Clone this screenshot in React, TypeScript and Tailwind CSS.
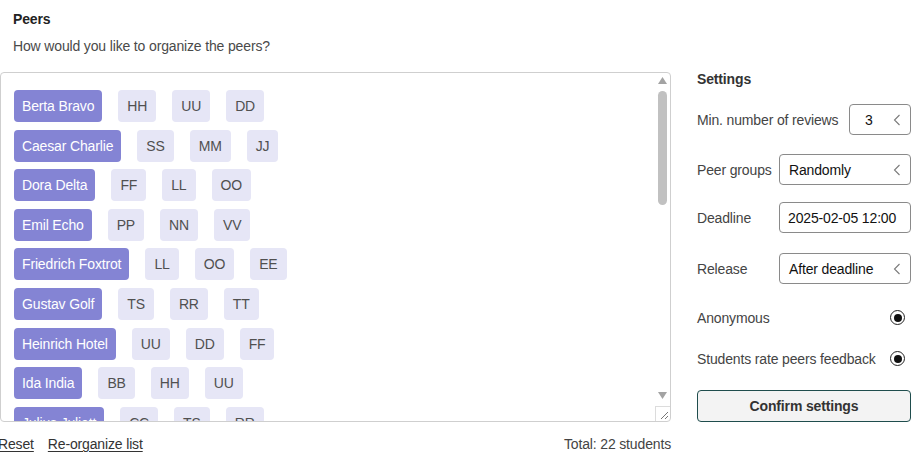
import React from "react";

type PeerRow = {
  name: string;
  peers: string[];
};

const rows: PeerRow[] = [
  { name: "Berta Bravo", peers: ["HH", "UU", "DD"] },
  { name: "Caesar Charlie", peers: ["SS", "MM", "JJ"] },
  { name: "Dora Delta", peers: ["FF", "LL", "OO"] },
  { name: "Emil Echo", peers: ["PP", "NN", "VV"] },
  { name: "Friedrich Foxtrot", peers: ["LL", "OO", "EE"] },
  { name: "Gustav Golf", peers: ["TS", "RR", "TT"] },
  { name: "Heinrich Hotel", peers: ["UU", "DD", "FF"] },
  { name: "Ida India", peers: ["BB", "HH", "UU"] },
  { name: "Julius Juliett", peers: ["CC", "TS", "RR"] },
];

function Chevron() {
  return (
    <svg width="8" height="12" viewBox="0 0 8 12" className="shrink-0">
      <polyline points="6.5,1 1.5,6 6.5,11" fill="none" stroke="#7a7a7a" strokeWidth="1.1" />
    </svg>
  );
}

function SelectBox({ value, width }: { value: string; width: string }) {
  return (
    <div
      className={`flex h-[31px] items-center justify-between rounded-[4px] border border-[#8a8a8a] pr-[9px] text-[#111] ${width}`}
    >
      <span>{value}</span>
      <Chevron />
    </div>
  );
}

function Radio() {
  return (
    <span className="mr-[6px] flex h-[15px] w-[15px] items-center justify-center rounded-full border-[1.5px] border-[#222]">
      <span className="h-[8px] w-[8px] rounded-full bg-[#111]" />
    </span>
  );
}

function PeerList() {
  return (
    <div className="flex h-[350px] overflow-hidden rounded-[4px] border border-[#cfcfcf]">
      <div className="flex flex-1 flex-col gap-[7.6px] overflow-hidden pl-[13px] pt-[17px]">
        {rows.map((row) => (
          <div key={row.name} className="flex shrink-0 items-center gap-[16px]">
            <span className="flex h-[32px] items-center rounded-[4px] bg-[#8484d4] px-[8px] text-white">
              {row.name}
            </span>
            {row.peers.map((peer, i) => (
              <span
                key={row.name + i}
                className="flex h-[32px] items-center rounded-[4px] bg-[#e6e6f6] px-[9px] text-[#505050]"
              >
                {peer}
              </span>
            ))}
          </div>
        ))}
      </div>
      <div className="flex w-[15px] shrink-0 flex-col items-center">
        <svg width="9" height="7" viewBox="0 0 9 7" className="mt-[4px]">
          <polygon points="4.5,0 9,7 0,7" fill="#a3a3a3" />
        </svg>
        <div className="mt-[7px] h-[114px] w-[9px] rounded-full bg-[#c1c1c1]" />
        <div className="flex-1" />
        <svg width="9" height="7" viewBox="0 0 9 7" className="mb-[7px]">
          <polygon points="0,0 9,0 4.5,7" fill="#a3a3a3" />
        </svg>
        <div className="h-[15px] w-[15px] border-l border-t border-[#dcdcdc]">
          <svg width="14" height="14" viewBox="0 0 14 14">
            <line x1="12" y1="5" x2="5" y2="12" stroke="#777" strokeWidth="1" />
            <line x1="12" y1="9" x2="9" y2="12" stroke="#777" strokeWidth="1" />
          </svg>
        </div>
      </div>
    </div>
  );
}

export default function App() {
  return (
    <div className="flex h-[457px] w-[917px] overflow-hidden bg-white font-['Liberation_Sans',Arial,sans-serif] text-[14px] leading-[20px] tracking-[-0.15px] text-[#444]">
      <div className="flex w-[671px] shrink-0 flex-col">
        <div className="pl-[13px] pt-[9px] font-bold text-[#222]">Peers</div>
        <div className="mt-[7px] pl-[13px] text-[#4a4a4a]">How would you like to organize the peers?</div>
        <div className="mt-[16px]">
          <PeerList />
        </div>
        <div className="mt-[12px] flex items-center justify-between">
          <div className="-ml-[2px] flex gap-[14px] text-[#333]">
            <span className="underline underline-offset-2">Reset</span>
            <span className="underline underline-offset-2">Re-organize list</span>
          </div>
          <span className="text-[#444]">Total: 22 students</span>
        </div>
      </div>

      <div className="ml-[26px] flex w-[214px] shrink-0 flex-col pt-[69px]">
        <div className="font-bold text-[#333]">Settings</div>
        <div className="mt-[15px] flex items-center justify-between">
          <span>Min. number of reviews</span>
          <SelectBox value="3" width="w-[62px] pl-[15px]" />
        </div>
        <div className="mt-[19px] flex items-center justify-between">
          <span>Peer groups</span>
          <SelectBox value="Randomly" width="w-[132px] pl-[9px]" />
        </div>
        <div className="mt-[17px] flex items-center justify-between">
          <span>Deadline</span>
          <div className="flex h-[31px] w-[132px] items-center rounded-[4px] border border-[#8a8a8a] pl-[8px] text-[#111]">
            2025-02-05 12:00
          </div>
        </div>
        <div className="mt-[20px] flex items-center justify-between">
          <span>Release</span>
          <SelectBox value="After deadline" width="w-[132px] pl-[9px]" />
        </div>
        <div className="mt-[18px] flex h-[31px] items-center justify-between">
          <span>Anonymous</span>
          <Radio />
        </div>
        <div className="mt-[10px] flex h-[31px] items-center justify-between">
          <span>Students rate peers feedback</span>
          <Radio />
        </div>
        <button className="mt-[16px] h-[32px] w-full rounded-[4px] border border-[#1f4d4d] bg-[#f3f3f3] font-bold text-[#333]">
          Confirm settings
        </button>
      </div>
    </div>
  );
}
